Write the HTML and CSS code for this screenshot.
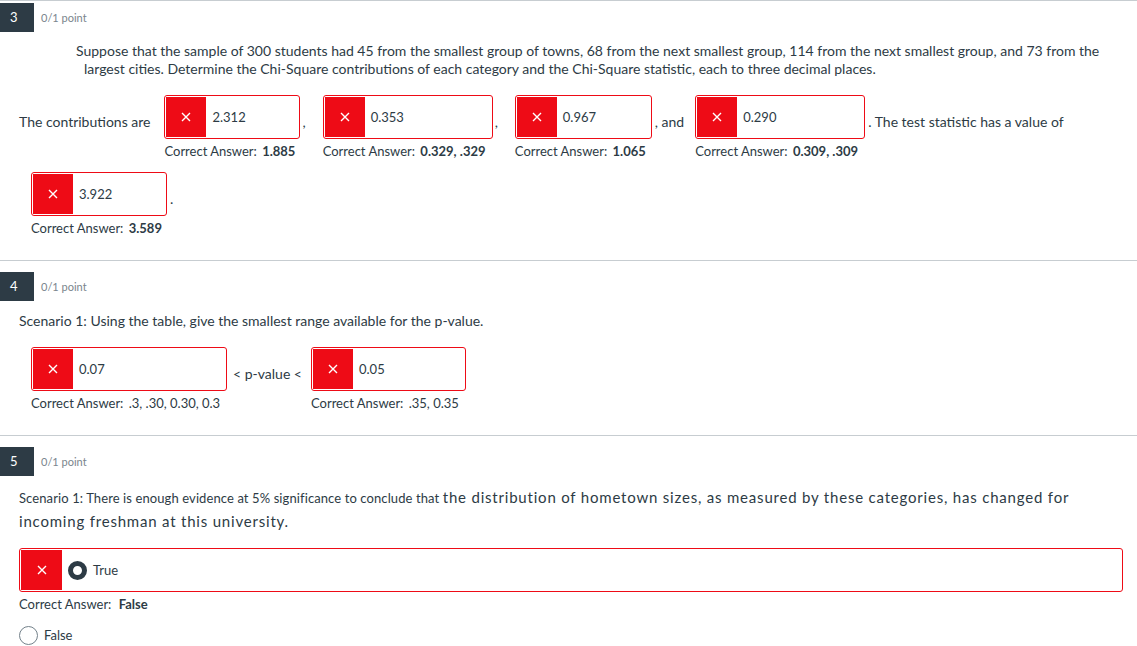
FILE: index.html
```html
<!DOCTYPE html>
<html lang="en">
<head>
<meta charset="utf-8">
<title>Quiz results</title>
<link rel="stylesheet" href="styles.css">
</head>
<body>
<main class="quiz">
  <section class="question q-first">
    <header class="q-head"><span class="q-num">3</span><span class="q-points">0/1 point</span></header>
    <p class="q-text hang">Suppose that the sample of 300 students had 45 from the smallest group of towns, 68 from the next smallest group, 114 from the next smallest group, and 73 from the largest cities. Determine the Chi-Square contributions of each category and the Chi-Square statistic, each to three decimal places.</p>
    <div class="fill-row row-a">
      <span class="txt lead">The contributions are</span>
      <div class="ans w136">
        <div class="box"><span class="mark"><svg viewBox="0 0 10 10" width="10" height="10"><path d="M1 1L9 9M9 1L1 9" stroke="#fff" stroke-width="1.4" fill="none"/></svg></span><span class="val">2.312</span></div>
        <div class="correct">Correct Answer: <b>1.885</b></div>
      </div>
      <span class="txt sep-comma">,</span>
      <div class="ans w170">
        <div class="box"><span class="mark"><svg viewBox="0 0 10 10" width="10" height="10"><path d="M1 1L9 9M9 1L1 9" stroke="#fff" stroke-width="1.4" fill="none"/></svg></span><span class="val">0.353</span></div>
        <div class="correct">Correct Answer: <b>0.329, .329</b></div>
      </div>
      <span class="txt sep-comma">,</span>
      <div class="ans w137">
        <div class="box"><span class="mark"><svg viewBox="0 0 10 10" width="10" height="10"><path d="M1 1L9 9M9 1L1 9" stroke="#fff" stroke-width="1.4" fill="none"/></svg></span><span class="val">0.967</span></div>
        <div class="correct">Correct Answer: <b>1.065</b></div>
      </div>
      <span class="txt sep-and">, and</span>
      <div class="ans w170">
        <div class="box"><span class="mark"><svg viewBox="0 0 10 10" width="10" height="10"><path d="M1 1L9 9M9 1L1 9" stroke="#fff" stroke-width="1.4" fill="none"/></svg></span><span class="val">0.290</span></div>
        <div class="correct">Correct Answer: <b>0.309, .309</b></div>
      </div>
      <span class="txt sep-end">. The test statistic has a value of</span>
    </div>
    <div class="fill-row row-b">
      <div class="ans w136">
        <div class="box"><span class="mark"><svg viewBox="0 0 10 10" width="10" height="10"><path d="M1 1L9 9M9 1L1 9" stroke="#fff" stroke-width="1.4" fill="none"/></svg></span><span class="val">3.922</span></div>
        <div class="correct">Correct Answer: <b>3.589</b></div>
      </div>
      <span class="txt sep-end">.</span>
    </div>
  </section>

  <section class="question">
    <header class="q-head"><span class="q-num">4</span><span class="q-points">0/1 point</span></header>
    <p class="q-text plain">Scenario 1: Using the table, give the smallest range available for the p-value.</p>
    <div class="fill-row row-b">
      <div class="ans w196">
        <div class="box"><span class="mark"><svg viewBox="0 0 10 10" width="10" height="10"><path d="M1 1L9 9M9 1L1 9" stroke="#fff" stroke-width="1.4" fill="none"/></svg></span><span class="val">0.07</span></div>
        <div class="correct">Correct Answer: <b class="light">.3, .30, 0.30, 0.3</b></div>
      </div>
      <span class="txt sep-pv">&lt; p-value &lt;</span>
      <div class="ans w155">
        <div class="box"><span class="mark"><svg viewBox="0 0 10 10" width="10" height="10"><path d="M1 1L9 9M9 1L1 9" stroke="#fff" stroke-width="1.4" fill="none"/></svg></span><span class="val">0.05</span></div>
        <div class="correct">Correct Answer: <b class="light">.35, 0.35</b></div>
      </div>
    </div>
  </section>

  <section class="question last">
    <header class="q-head"><span class="q-num">5</span><span class="q-points">0/1 point</span></header>
    <p class="q-text tf">Scenario 1: There is enough evidence at 5% significance to conclude that <span class="wide">the distribution of hometown sizes, as measured by these categories, has changed for incoming freshman at this university.</span></p>
    <div class="choice-box">
      <span class="mark"><svg viewBox="0 0 10 10" width="10" height="10"><path d="M1 1L9 9M9 1L1 9" stroke="#fff" stroke-width="1.4" fill="none"/></svg></span>
      <span class="radio checked"></span>
      <span class="choice-label">True</span>
    </div>
    <div class="correct tf-correct">Correct Answer: <b>False</b></div>
    <div class="choice">
      <span class="radio"></span>
      <span class="choice-label">False</span>
    </div>
  </section>
</main>
</body>
</html>
```
FILE: styles.css
```css
* { box-sizing: border-box; }
html, body { margin: 0; padding: 0; background: #fff; }
body {
  font-family: Lato, "Noto Sans", sans-serif;
  color: #2d3b45;
  font-size: 14px;
  width: 1137px;
  overflow: hidden;
}
.quiz { border-top: 1px solid #c7cdd1; }
.question {
  border-bottom: 1px solid #c7cdd1;
  padding: 11px 0 24px;
}
.question.q-first { padding-top: 2px; }
.question.last { border-bottom: none; padding-bottom: 0; }

.q-head { display: flex; align-items: center; height: 29px; }
.q-num {
  width: 34px; height: 29px;
  background: #2d3b45; color: #fff;
  font-size: 13px; line-height: 29px;
  padding-left: 10px;
}
.q-points { margin-left: 7px; font-size: 11px; color: #7a858d; }

.q-text { margin: 0; }
.q-text.hang {
  margin-top: 10px;
  padding: 0 20px 0 84px;
  text-indent: -8px;
  line-height: 18px;
  font-size: 14px;
}
.q-text.plain {
  margin-top: 11px;
  padding-left: 19px;
  line-height: 18px;
  font-size: 14px;
}
.q-text.tf {
  margin-top: 10px;
  padding: 0 30px 0 19px;
  line-height: 23px;
  font-size: 13px;
  letter-spacing: 0.1px;
}
.q-text.tf .wide { font-size: 15px; font-weight: 400; letter-spacing: 0.8px; }

.fill-row { display: flex; align-items: flex-start; }
.row-a { margin-top: 17px; padding-left: 19px; }
.row-b { margin-top: 17px; padding-left: 31px; }
.q-first .row-b { margin-top: 13px; }

.txt { line-height: 18px; padding-top: 18px; white-space: nowrap; font-size: 14px; }
.lead { margin-right: 14px; }
.sep-comma { padding-left: 2px; padding-right: 17px; }
.sep-and { padding-left: 3px; padding-right: 11px; }
.sep-end { padding-left: 3px; }
.sep-pv { padding: 18px 9px 0 6px; }

.ans { flex: none; }
.w136 { width: 136px; }
.w137 { width: 137px; }
.w155 { width: 155px; }
.w170 { width: 170px; }
.w196 { width: 196px; }

.box, .choice-box {
  display: flex; align-items: center;
  height: 44px;
  border: 1px solid #ee0b16;
  border-radius: 3px;
  padding: 1px;
}
.mark {
  flex: none;
  width: 40px; align-self: stretch;
  background: #ee0b16;
  display: flex; align-items: center; justify-content: center;
}
.val { margin-left: 6px; font-size: 13px; }

.correct { margin-top: 4px; line-height: 16px; font-size: 13px; white-space: nowrap; }
.correct b { font-weight: 700; margin-left: 2px; }
.correct b.light { font-weight: 400; }

.choice-box { margin: 14px 14px 0 19px; }
.choice-box .mark { width: 41px; }
.radio {
  flex: none;
  width: 19px; height: 19px;
  border-radius: 50%;
  border: 1px solid #73818a;
  background: #fff;
}
.radio.checked { border: 5px solid #2d3b45; margin-left: 6px; }
.choice-label { margin-left: 6px; font-size: 13px; }
.tf-correct { margin-left: 19px; }
.tf-correct b { margin-left: 4px; }
.choice { display: flex; align-items: center; height: 20px; margin: 13px 0 0 19px; }
```
